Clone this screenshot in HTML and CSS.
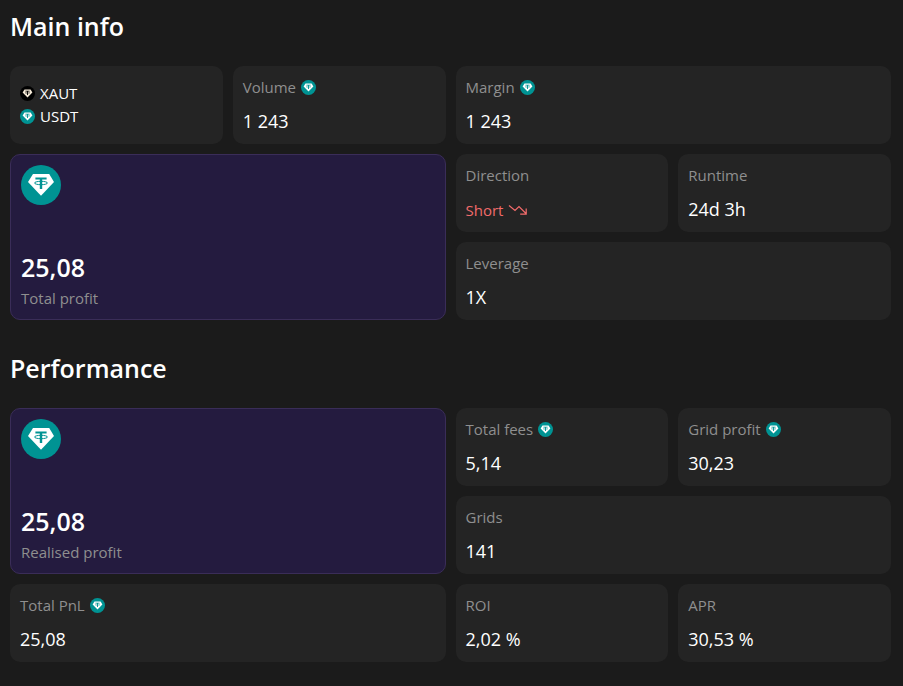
FILE: index.html
```html
<!DOCTYPE html>
<html lang="en">
<head>
    <meta charset="UTF-8">
    <meta name="viewport" content="width=device-width, initial-scale=1.0">
    <title>Bot stats</title>
    <link rel="stylesheet" href="styles.css">
</head>
<body>
    <!-- shared icons -->
    <svg class="sprite" aria-hidden="true">
        <symbol id="tether" viewBox="0 0 40 40">
            <circle class="coin-bg" cx="20" cy="20" r="20"/>
            <path class="coin-gem" d="M12 9h16.2l4.8 8L20 30.7 7 17z"/>
            <path class="coin-bg" d="M14.4 12.6h11.2v2h-4.4V24h-2.4v-9.4h-4.4z"/>
            <ellipse class="coin-ring" cx="20" cy="18" rx="6.5" ry="1.7"/>
        </symbol>
    </svg>

    <section class="section">
        <h2>Main info</h2>
        <div class="grid">
            <div class="card pair">
                <div class="coin"><svg class="icon gold"><use href="#tether"/></svg>XAUT</div>
                <div class="coin"><svg class="icon"><use href="#tether"/></svg>USDT</div>
            </div>
            <div class="card">
                <div class="label">Volume <svg class="icon"><use href="#tether"/></svg></div>
                <div class="value">1 243</div>
            </div>
            <div class="card wide">
                <div class="label">Margin <svg class="icon"><use href="#tether"/></svg></div>
                <div class="value">1 243</div>
            </div>
            <div class="card profit">
                <svg class="icon-big"><use href="#tether"/></svg>
                <div>
                    <div class="total">25,08</div>
                    <div class="label">Total profit</div>
                </div>
            </div>
            <div class="card">
                <div class="label">Direction</div>
                <div class="value short">
                    Short
                    <svg class="trend" viewBox="0 0 20 12"><path d="M1 1.5l6 5 4-4 7 7M18.2 4.5v5.7h-6"/></svg>
                </div>
            </div>
            <div class="card">
                <div class="label">Runtime</div>
                <div class="value">24d 3h</div>
            </div>
            <div class="card wide">
                <div class="label">Leverage</div>
                <div class="value">1X</div>
            </div>
        </div>
    </section>

    <section class="section">
        <h2>Performance</h2>
        <div class="grid">
            <div class="card profit">
                <svg class="icon-big"><use href="#tether"/></svg>
                <div>
                    <div class="total">25,08</div>
                    <div class="label">Realised profit</div>
                </div>
            </div>
            <div class="card">
                <div class="label">Total fees <svg class="icon"><use href="#tether"/></svg></div>
                <div class="value">5,14</div>
            </div>
            <div class="card">
                <div class="label">Grid profit <svg class="icon"><use href="#tether"/></svg></div>
                <div class="value">30,23</div>
            </div>
            <div class="card wide">
                <div class="label">Grids</div>
                <div class="value">141</div>
            </div>
            <div class="card wide">
                <div class="label">Total PnL <svg class="icon"><use href="#tether"/></svg></div>
                <div class="value">25,08</div>
            </div>
            <div class="card">
                <div class="label">ROI</div>
                <div class="value">2,02 %</div>
            </div>
            <div class="card">
                <div class="label">APR</div>
                <div class="value">30,53 %</div>
            </div>
        </div>
    </section>
</body>
</html>
```

FILE: styles.css
```css
* {
    box-sizing: border-box;
}

body {
    margin: 0;
    padding: 10px 12px 24px 10px;
    background-color: #1b1b1b;
    color: #fff;
    font-family: 'Open Sans', 'Noto Sans', sans-serif;
}

.sprite {
    display: block;
    width: 0;
    height: 0;
}

.section + .section {
    margin-top: 32px;
}

h2 {
    margin: 0 0 24px;
    font-size: 25px;
    font-weight: 600;
    line-height: 32px;
}

.grid {
    display: grid;
    grid-template-columns: repeat(4, 1fr);
    grid-auto-rows: minmax(78px, auto);
    gap: 10px;
}

.card {
    display: flex;
    flex-direction: column;
    justify-content: space-between;
    padding: 10px;
    border-radius: 10px;
    background-color: #242424;
}

.wide {
    grid-column: span 2;
}

.profit {
    grid-column: span 2;
    grid-row: span 2;
    border: 1px solid #3a2d58;
    background-color: #241b3f;
}

.pair {
    justify-content: center;
}

.coin {
    display: flex;
    align-items: center;
    gap: 5px;
    font-size: 15px;
    line-height: 23px;
}

.label {
    display: flex;
    align-items: center;
    gap: 5px;
    color: #8f8f8f;
    font-size: 15px;
    line-height: 22px;
}

.value {
    font-size: 18px;
    font-weight: 500;
    line-height: 26px;
}

.total {
    font-size: 25px;
    font-weight: 600;
    line-height: 40px;
}

.short {
    display: flex;
    align-items: center;
    gap: 5px;
    color: #f26b6b;
    font-size: 15px;
    font-weight: 400;
    line-height: 24px;
}

.trend {
    width: 20px;
    height: 12px;
    fill: none;
    stroke: currentColor;
    stroke-width: 1.2;
}

.icon {
    width: 15px;
    height: 15px;
}

.icon-big {
    width: 40px;
    height: 40px;
}

.coin-bg {
    fill: var(--coin, #009393);
}

.coin-gem {
    fill: var(--gem, #fff);
}

.coin-ring {
    fill: none;
    stroke: var(--coin, #009393);
    stroke-width: 1;
}

.gold {
    --coin: #000;
    --gem: #f5ead8;
}
```
